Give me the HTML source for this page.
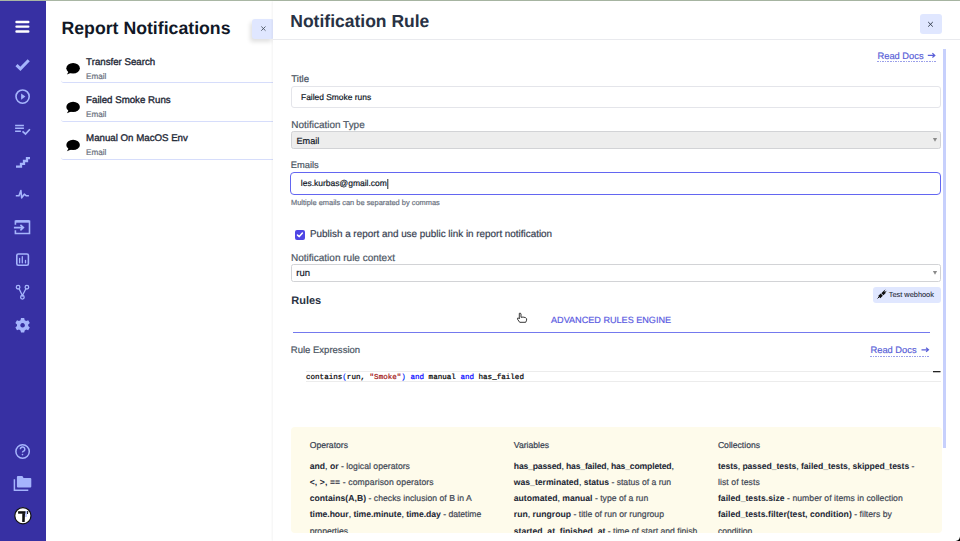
<!DOCTYPE html>
<html><head><meta charset="utf-8">
<style>
*{box-sizing:border-box;margin:0;padding:0}
html,body{width:960px;height:541px;overflow:hidden;background:#fff;font-family:"Liberation Sans",sans-serif;text-rendering:geometricPrecision}
body{position:relative}
.a{position:absolute}
.tx{position:absolute;white-space:nowrap;line-height:1;-webkit-text-stroke:0.2px currentColor}
b{font-weight:bold;-webkit-text-stroke:0.05px currentColor}
</style></head><body>
<div class="a" style="left:0;top:0;width:960px;height:1px;background:#a9b7a4"></div>
<div class="a" style="left:0;top:1px;width:46px;height:540px;background:#3730a3"></div>
<div class="tx" style="left:61.50px;top:19.52px;font-size:17.7px;font-weight:bold;color:#111827;-webkit-text-stroke:0;">Report Notifications</div>
<div class="a" style="left:61px;top:44.5px;width:212px;height:38.5px;border-bottom:1px solid #d6ddfb;border-radius:0 0 0 3px"></div>
<div class="tx" style="left:86.10px;top:58.49px;font-size:9.7px;font-weight:normal;color:#1f2937;-webkit-text-stroke:0.35px #1f2937">Transfer Search</div>
<div class="tx" style="left:86.00px;top:73.29px;font-size:8.16px;font-weight:normal;color:#6b7280;">Email</div>
<div class="a" style="left:61px;top:83.2px;width:212px;height:38.5px;border-bottom:1px solid #d6ddfb;border-radius:0 0 0 3px"></div>
<div class="tx" style="left:86.10px;top:96.29px;font-size:9.7px;font-weight:normal;color:#1f2937;-webkit-text-stroke:0.35px #1f2937">Failed Smoke Runs</div>
<div class="tx" style="left:86.00px;top:111.29px;font-size:8.16px;font-weight:normal;color:#6b7280;">Email</div>
<div class="a" style="left:61px;top:121.2px;width:212px;height:38.5px;border-bottom:1px solid #d6ddfb;border-radius:0 0 0 3px"></div>
<div class="tx" style="left:86.10px;top:134.29px;font-size:9.7px;font-weight:normal;color:#1f2937;-webkit-text-stroke:0.35px #1f2937">Manual On MacOS Env</div>
<div class="tx" style="left:86.00px;top:149.29px;font-size:8.16px;font-weight:normal;color:#6b7280;">Email</div>
<div class="a" style="left:252px;top:19px;width:22px;height:20px;background:#e0e7ff;border-radius:3px;box-shadow:-2px 3px 4px rgba(0,0,0,.12)"></div>
<div class="a" style="left:273px;top:1px;width:687px;height:540px;background:#fff;box-shadow:-1px 0 2px rgba(0,0,0,.05)"></div>
<div class="a" style="left:273px;top:39px;width:687px;height:1px;background:#e9eaee"></div>
<div class="tx" style="left:290.30px;top:13.49px;font-size:17.5px;font-weight:bold;color:#283244;-webkit-text-stroke:0;">Notification Rule</div>
<div class="a" style="left:919.5px;top:14px;width:22.5px;height:20px;background:#e0e7ff;border-radius:3px"></div>
<div class="tx" style="left:877.50px;top:52.31px;font-size:9.32px;font-weight:normal;color:#5a5fd8;">Read Docs</div>
<div class="a" style="left:877px;top:61px;width:59px;height:1px;background:repeating-linear-gradient(90deg,#9ba0ea 0 1.6px,transparent 1.6px 2.6px)"></div>
<svg class="a" style="left:0;top:0" width="960" height="541"><path d="M927.8 55.4H934.6M932.4 53.3L934.8 55.4L932.4 57.5" fill="none" stroke="#5a5fd8" stroke-width="1.2"/></svg>
<div class="a" style="left:943px;top:49px;width:3px;height:399px;background:#c7d0fc"></div>
<div class="tx" style="left:291.20px;top:74.61px;font-size:9.68px;font-weight:normal;color:#4b5563;">Title</div>
<div class="a" style="left:291px;top:86px;width:650px;height:22px;border:1px solid #e4e5ea;border-radius:3px"></div>
<div class="tx" style="left:301.00px;top:92.77px;font-size:8.42px;font-weight:normal;color:#111827;">Failed Smoke runs</div>
<div class="tx" style="left:291.20px;top:121.15px;font-size:9.98px;font-weight:normal;color:#4b5563;">Notification Type</div>
<div class="a" style="left:291px;top:131px;width:650px;height:18px;border:1px solid #d2d3d6;border-radius:2.5px;background:#ededed"></div>
<div class="tx" style="left:296.50px;top:136.68px;font-size:9.12px;font-weight:normal;color:#111827;">Email</div>
<div class="tx" style="left:290.80px;top:161.40px;font-size:9.33px;font-weight:normal;color:#4b5563;">Emails</div>
<div class="a" style="left:290px;top:172px;width:651px;height:23px;border:1.5px solid #6366f1;border-radius:4px"></div>
<div class="tx" style="left:300.80px;top:179.10px;font-size:8.51px;font-weight:normal;color:#111827;">les.kurbas@gmail.com</div>
<div class="tx" style="left:291.00px;top:198.69px;font-size:7.45px;font-weight:normal;color:#6b7280;">Multiple emails can be separated by commas</div>
<div class="a" style="left:295px;top:230px;width:10px;height:10px;background:#4f46e5;border-radius:2px"></div>
<div class="tx" style="left:310.00px;top:230.12px;font-size:9.9px;font-weight:normal;color:#374151;">Publish a report and use public link in report notification</div>
<div class="tx" style="left:291.00px;top:254.03px;font-size:10px;font-weight:normal;color:#4b5563;">Notification rule context</div>
<div class="a" style="left:291px;top:264px;width:650px;height:18px;border:1px solid #d2d3d6;border-radius:2.5px;background:#fff"></div>
<div class="tx" style="left:296.25px;top:269.04px;font-size:9.52px;font-weight:normal;color:#111827;">run</div>
<div class="tx" style="left:291.25px;top:295.79px;font-size:11px;font-weight:bold;color:#2b3444;-webkit-text-stroke:0;">Rules</div>
<div class="a" style="left:873px;top:287px;width:68px;height:16px;background:#e0e7ff;border-radius:3px"></div>
<div class="tx" style="left:888.80px;top:291.04px;font-size:7.39px;font-weight:normal;color:#1f2937;-webkit-text-stroke:0.08px #1f2937">Test webhook</div>
<div class="tx" style="left:551.00px;top:315.79px;font-size:9.11px;font-weight:normal;color:#5b5ce2;">ADVANCED RULES ENGINE</div>
<div class="a" style="left:293px;top:332px;width:637px;height:1.2px;background:#7479ee"></div>
<div class="tx" style="left:290.80px;top:346.34px;font-size:9.52px;font-weight:normal;color:#4b5563;">Rule Expression</div>
<div class="tx" style="left:870.50px;top:345.91px;font-size:9.32px;font-weight:normal;color:#5a5fd8;">Read Docs</div>
<div class="a" style="left:870px;top:355.5px;width:59px;height:1px;background:repeating-linear-gradient(90deg,#9ba0ea 0 1.6px,transparent 1.6px 2.6px)"></div>
<svg class="a" style="left:0;top:0" width="960" height="541"><path d="M921.5 349.8H928.3M926.1 347.7L928.5 349.8L926.1 351.9" fill="none" stroke="#5a5fd8" stroke-width="1.2"/></svg>
<div class="a" style="left:306px;top:371px;width:635px;height:11px;border-top:1px solid #ececec;border-bottom:1px solid #ececec"></div>
<div class="tx" style="left:306px;top:374.99px;font-family:'Liberation Mono',monospace;font-size:7.57px;color:#000"><span style="color:#000">contains</span><span style="color:#0431fa">(</span>run, <span style="color:#a31515">"Smoke"</span><span style="color:#0431fa">)</span> <span style="color:#0000ff">and</span> manual <span style="color:#0000ff">and</span> has_failed</div>
<div class="a" style="left:291px;top:427px;width:651px;height:106px;background:#fefbeb;border-radius:4px"></div>
<div class="tx" style="left:309.70px;top:440.68px;font-size:8.65px;font-weight:normal;color:#374151;">Operators</div>
<div class="tx" style="left:513.80px;top:440.68px;font-size:8.65px;font-weight:normal;color:#374151;">Variables</div>
<div class="tx" style="left:717.90px;top:440.68px;font-size:8.65px;font-weight:normal;color:#374151;">Collections</div>
<div class="a" style="left:291px;top:427px;width:651px;height:106px;overflow:hidden">
<div class="tx" style="left:18.70px;top:34.58px;font-size:8.65px;color:#3f4754;letter-spacing:0.019px;"><b style="color:#1f2937">and</b>, <b style="color:#1f2937">or</b> - logical operators</div>
<div class="tx" style="left:18.70px;top:50.88px;font-size:8.65px;color:#3f4754;letter-spacing:0.104px;"><b style="color:#1f2937">&lt;, &gt;, ==</b> - comparison operators</div>
<div class="tx" style="left:18.70px;top:66.98px;font-size:8.65px;color:#3f4754;letter-spacing:0.026px;"><b style="color:#1f2937">contains(A,B)</b> - checks inclusion of B in A</div>
<div class="tx" style="left:18.70px;top:83.28px;font-size:8.65px;color:#3f4754;letter-spacing:-0.036px;"><b style="color:#1f2937">time.hour</b>, <b style="color:#1f2937">time.minute</b>, <b style="color:#1f2937">time.day</b> - datetime</div>
<div class="tx" style="left:18.70px;top:100.48px;font-size:8.65px;color:#3f4754;">properties</div>
<div class="tx" style="left:222.80px;top:34.58px;font-size:8.65px;color:#3f4754;letter-spacing:-0.171px;"><b style="color:#1f2937">has_passed</b>, <b style="color:#1f2937">has_failed</b>, <b style="color:#1f2937">has_completed</b>,</div>
<div class="tx" style="left:222.84px;top:50.88px;font-size:8.65px;color:#3f4754;letter-spacing:-0.010px;"><b style="color:#1f2937">was_terminated</b>, <b style="color:#1f2937">status</b> - status of a run</div>
<div class="tx" style="left:222.80px;top:66.98px;font-size:8.65px;color:#3f4754;letter-spacing:0.006px;"><b style="color:#1f2937">automated</b>, <b style="color:#1f2937">manual</b> - type of a run</div>
<div class="tx" style="left:222.80px;top:83.28px;font-size:8.65px;color:#3f4754;letter-spacing:0.016px;"><b style="color:#1f2937">run</b>, <b style="color:#1f2937">rungroup</b> - title of run or rungroup</div>
<div class="tx" style="left:222.80px;top:100.48px;font-size:8.65px;color:#3f4754;"><b style="color:#1f2937">started_at</b>, <b style="color:#1f2937">finished_at</b> - time of start and finish</div>
<div class="tx" style="left:426.90px;top:34.58px;font-size:8.65px;color:#3f4754;letter-spacing:-0.061px;"><b style="color:#1f2937">tests</b>, <b style="color:#1f2937">passed_tests</b>, <b style="color:#1f2937">failed_tests</b>, <b style="color:#1f2937">skipped_tests</b> -</div>
<div class="tx" style="left:426.90px;top:50.88px;font-size:8.65px;color:#3f4754;letter-spacing:0.095px;">list of tests</div>
<div class="tx" style="left:426.90px;top:66.98px;font-size:8.65px;color:#3f4754;letter-spacing:0.036px;"><b style="color:#1f2937">failed_tests.size</b> - number of items in collection</div>
<div class="tx" style="left:426.90px;top:83.28px;font-size:8.65px;color:#3f4754;letter-spacing:0.019px;"><b style="color:#1f2937">failed_tests.filter(test, condition)</b> - filters by</div>
<div class="tx" style="left:426.90px;top:100.48px;font-size:8.65px;color:#3f4754;">condition</div>
</div>
<svg class="a" style="left:0;top:0" width="960" height="541" viewBox="0 0 960 541">
<g stroke="#fff" stroke-width="2.4" stroke-linecap="round"><path d="M16.5 22H28.3M16.5 26.6H28.3M16.5 31.5H28.3"/></g>
<path d="M16.5 65.2L20.4 68.9L28.7 60.2" fill="none" stroke="#a5b4fc" stroke-width="3"/>
<circle cx="22.6" cy="96.6" r="6.6" fill="none" stroke="#a5b4fc" stroke-width="1.6"/>
<path d="M21.1 93.5L25.4 96.6L21.1 99.7Z" fill="#a5b4fc"/>
<g stroke="#a5b4fc" stroke-width="1.5" fill="none"><path d="M15.1 125.4H23.9M15.1 128.3H23.9M15.1 131.3H20.9"/><path d="M22.5 131.4L25.5 134L29.9 129.2" stroke-width="1.7"/></g>
<path d="M16 166.6H21V163.8H24V161H27V158.1H30" fill="none" stroke="#a5b4fc" stroke-width="2.3"/>
<path d="M15.8 195.8H19L20.9 190.5L21.7 197.9L24.3 194.2L26.4 195.8H28.9" fill="none" stroke="#a5b4fc" stroke-width="1.6" stroke-linejoin="round"/>
<path d="M15.4 224.8V221.3H29.5V233.5H15.4V230.2" fill="none" stroke="#a5b4fc" stroke-width="1.6"/>
<path d="M15.4 221.4H29.5" stroke="#a5b4fc" stroke-width="2.6"/>
<g fill="none" stroke="#a5b4fc" stroke-width="1.6"><path d="M13.9 227.6H23.4M20.4 224.9L23.4 227.6L20.4 230.4"/></g>
<rect x="16.8" y="254" width="11.6" height="11.3" rx="1.5" fill="none" stroke="#a5b4fc" stroke-width="1.6"/>
<g stroke="#a5b4fc" stroke-width="1.3" stroke-linecap="round"><path d="M19.6 258.5V262.8M22.3 256.7V262.8M25.5 260.5V262.8"/></g>
<g fill="none" stroke="#a5b4fc" stroke-width="1.3"><circle cx="18.1" cy="287.2" r="1.8"/><circle cx="26.9" cy="287.2" r="1.8"/><circle cx="22.4" cy="297.3" r="1.8"/><path d="M19.1 288.8L22.4 295.5L25.9 288.8"/></g>
<g transform="translate(22.6 325.3)" fill="#a5b4fc"><path id="gear" d="M-1.6 -7.2H1.6L2.1 -5.1L3.6 -4.3L5.6 -5L7.2 -2.2L5.6 -0.8V0.8L7.2 2.2L5.6 5L3.6 4.3L2.1 5.1L1.6 7.2H-1.6L-2.1 5.1L-3.6 4.3L-5.6 5L-7.2 2.2L-5.6 0.8V-0.8L-7.2 -2.2L-5.6 -5L-3.6 -4.3L-2.1 -5.1Z M0 -2.3A2.3 2.3 0 1 0 0.01 -2.3Z" fill-rule="evenodd"/></g>
<circle cx="22.6" cy="451.5" r="6.7" fill="none" stroke="#a5b4fc" stroke-width="1.5"/>
<path d="M20.4 449.3A2.2 2.2 0 1 1 23.2 451.3C22.6 451.6 22.5 452 22.5 452.6" fill="none" stroke="#a5b4fc" stroke-width="1.4"/>
<circle cx="22.5" cy="454.6" r="0.8" fill="#a5b4fc"/>
<path d="M14.4 479.3V490.2H28.3" fill="none" stroke="#a5b4fc" stroke-width="1.5"/>
<path d="M17.9 476.1H22.4L23.6 477.9H30.3Q31.3 477.9 31.3 478.9V486.6Q31.3 487.6 30.3 487.6H17.9Q16.9 487.6 16.9 486.6V477.1Q16.9 476.1 17.9 476.1Z" fill="#a5b4fc"/>
<circle cx="22.9" cy="515.7" r="8.1" fill="#fff" stroke="#111" stroke-width="1.2"/>
<path d="M18.1 511.2H25.7V513.7H18.1Z" fill="#111"/>
<path d="M22.3 513.2H25L24.7 522H22.2Z" fill="#111"/>
<path d="M25.6 511.1H26.9L26.6 517H25.3Z" fill="#a5b4fc"/>
<path d="M27.2 511.1H28.3L28 514.1H27Z" fill="#111"/>
<g><ellipse cx="73.1" cy="68.2" rx="6.8" ry="5.2" fill="#000"/><path d="M68.8 71.2L66.9 74.6L71.8 72.6Z" fill="#000"/></g>
<g><ellipse cx="73.1" cy="106.9" rx="6.8" ry="5.2" fill="#000"/><path d="M68.8 109.9L66.9 113.3L71.8 111.3Z" fill="#000"/></g>
<g><ellipse cx="73.1" cy="144.9" rx="6.8" ry="5.2" fill="#000"/><path d="M68.8 147.9L66.9 151.3L71.8 149.3Z" fill="#000"/></g>
<path d="M261.3 26.5L265.5 30.7M265.5 26.5L261.3 30.7" stroke="#4b5563" stroke-width="0.9"/>
<path d="M928.2 22L932.8 26.6M932.8 22L928.2 26.6" stroke="#374151" stroke-width="1"/>
<path d="M297.5 235.1L299.3 236.6L302.4 233" fill="none" stroke="#fff" stroke-width="1.5" stroke-linecap="round" stroke-linejoin="round"/>
<path d="M932.9 138H937.1L935 141.8Z" fill="#8a8a8a"/>
<path d="M932.9 271H937.1L935 274.8Z" fill="#8a8a8a"/>
<g stroke="#111" fill="none"><path d="M879.23 297.17L881.77 294.63M882.4 294.2L884.87 291.73" stroke-width="3"/><path d="M877.6 298.4L879.5 296.5" stroke-width="1"/><path d="M885.2 292.1L886.4 290.9M884.1 290.9L885.2 289.8" stroke-width="0.8"/></g>
<rect x="933" y="371" width="7.5" height="1.3" fill="#222"/>
<path d="M960 536.5V541H955.5Q959.5 540.5 960 536.5Z" fill="#000"/>
<path d="M387.8 179V189" stroke="#111" stroke-width="0.9"/>
<path d="M519.3 313.3Q520.6 312.6 521 314V317.3Q523 316.7 525.4 317.6Q527.2 318.5 526.6 320.2L525.7 322.3H519.7L517.5 319.2Q517 318 518.4 317.9L519.3 318.9Z" fill="#fff" stroke="#222" stroke-width="0.9" stroke-linejoin="round"/>
</svg>
</body></html>
